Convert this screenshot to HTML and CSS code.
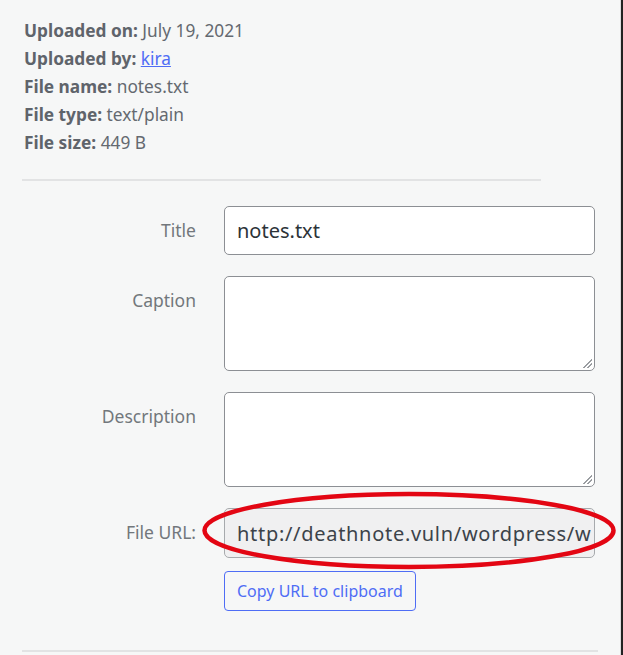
FILE: index.html
```html
<!DOCTYPE html>
<html>
<head>
<meta charset="utf-8">
<link rel="stylesheet" href="styles.css">
</head>
<body>
<div class="panel">
  <div class="details">
    <div class="line"><strong>Uploaded on:</strong> July 19, 2021</div>
    <div class="line"><strong>Uploaded by:</strong> <a class="link" href="#">kira</a></div>
    <div class="line"><strong>File name:</strong> notes.txt</div>
    <div class="line"><strong>File type:</strong> text/plain</div>
    <div class="line"><strong>File size:</strong> 449 B</div>
  </div>
  <div class="sep"></div>
  <div class="settings">
    <div class="row">
      <label class="lbl">Title</label>
      <input class="field" type="text" value="notes.txt">
    </div>
    <div class="row">
      <label class="lbl">Caption</label>
      <textarea class="area"></textarea>
    </div>
    <div class="row">
      <label class="lbl">Description</label>
      <textarea class="area"></textarea>
    </div>
    <div class="row">
      <label class="lbl">File URL:</label>
      <div class="urlcol">
        <input class="field url" type="text" readonly value="http://deathnote.vuln/wordpress/wp-content/uploads/2021/07/notes.txt">
        <button class="copy" type="button">Copy URL to clipboard</button>
      </div>
    </div>
  </div>
  <div class="sep2"></div>
  <svg class="ring" width="414" height="79" viewBox="0 0 414 79">
    <ellipse cx="207" cy="39.5" rx="204.5" ry="36.5" fill="none" stroke="#e30613" stroke-width="4.5"/>
  </svg>
</div>
</body>
</html>
```
FILE: styles.css
```css
html, body {
  margin: 0;
  padding: 0;
  background: #222;
}
body {
  width: 623px;
  height: 655px;
  overflow: hidden;
  font-family: "Noto Sans", "Open Sans", sans-serif;
}
.panel {
  position: relative;
  width: 620px;
  height: 655px;
  background: #f6f7f7;
  border-right: 1px solid #dcdcde;
  box-sizing: content-box;
}
.details {
  padding: 17px 0 0 24px;
  color: #646970;
  font-size: 17.3px;
  line-height: 28px;
}
.details strong {
  font-weight: 700;
  color: #5f646b;
}
.link {
  color: #4f6df5;
  text-decoration: underline;
}
.sep {
  margin: 22px 0 0 22px;
  width: 519px;
  height: 2px;
  background: #e2e3e4;
}
.settings {
  display: flex;
  flex-direction: column;
  gap: 21px;
  padding-top: 25px;
}
.row {
  display: flex;
  align-items: flex-start;
}
.lbl {
  width: 196px;
  text-align: right;
  line-height: 49px;
  font-size: 17.5px;
  color: #72777c;
  margin-right: 28px;
  flex-shrink: 0;
}
.field {
  box-sizing: border-box;
  width: 371px;
  height: 49px;
  border: 1px solid #8c8f94;
  border-radius: 5px;
  background: #fff;
  padding: 0 12px;
  font-family: "Noto Sans", sans-serif;
  font-size: 20px;
  color: #2c3338;
  margin: 0;
  outline: none;
}
.area {
  box-sizing: border-box;
  width: 371px;
  height: 95px;
  border: 1px solid #8c8f94;
  border-radius: 5px;
  margin: 0;
  display: block;
  resize: none;
  font-family: "Noto Sans", sans-serif;
  font-size: 19px;
  background:
    linear-gradient(135deg, #fff 50%, transparent 50%) no-repeat right 2px bottom 2px / 13px 13px,
    repeating-linear-gradient(135deg, #fff 0 2px, #9a9da1 2px 3.2px) no-repeat right 2px bottom 2px / 13px 13px,
    #fff;
}
.urlcol {
  display: flex;
  flex-direction: column;
  align-items: flex-start;
  gap: 13px;
}
.field.url {
  height: 50px;
  padding-right: 3px;
  letter-spacing: 0.7px;
  background: #f0f0f1;
  color: #3c434a;
  border-color: #a7aaad;
}
.copy {
  box-sizing: border-box;
  height: 40px;
  padding: 0 12px;
  border: 1px solid #4f6df5;
  border-radius: 4px;
  background: #f6f7f7;
  color: #4f6df5;
  font-family: "Noto Sans", sans-serif;
  font-size: 16px;
  margin: 0;
}
.sep2 {
  position: absolute;
  left: 22px;
  top: 650px;
  width: 576px;
  height: 2px;
  background: #e2e3e4;
}
.ring {
  position: absolute;
  left: 202px;
  top: 491px;
}
```
